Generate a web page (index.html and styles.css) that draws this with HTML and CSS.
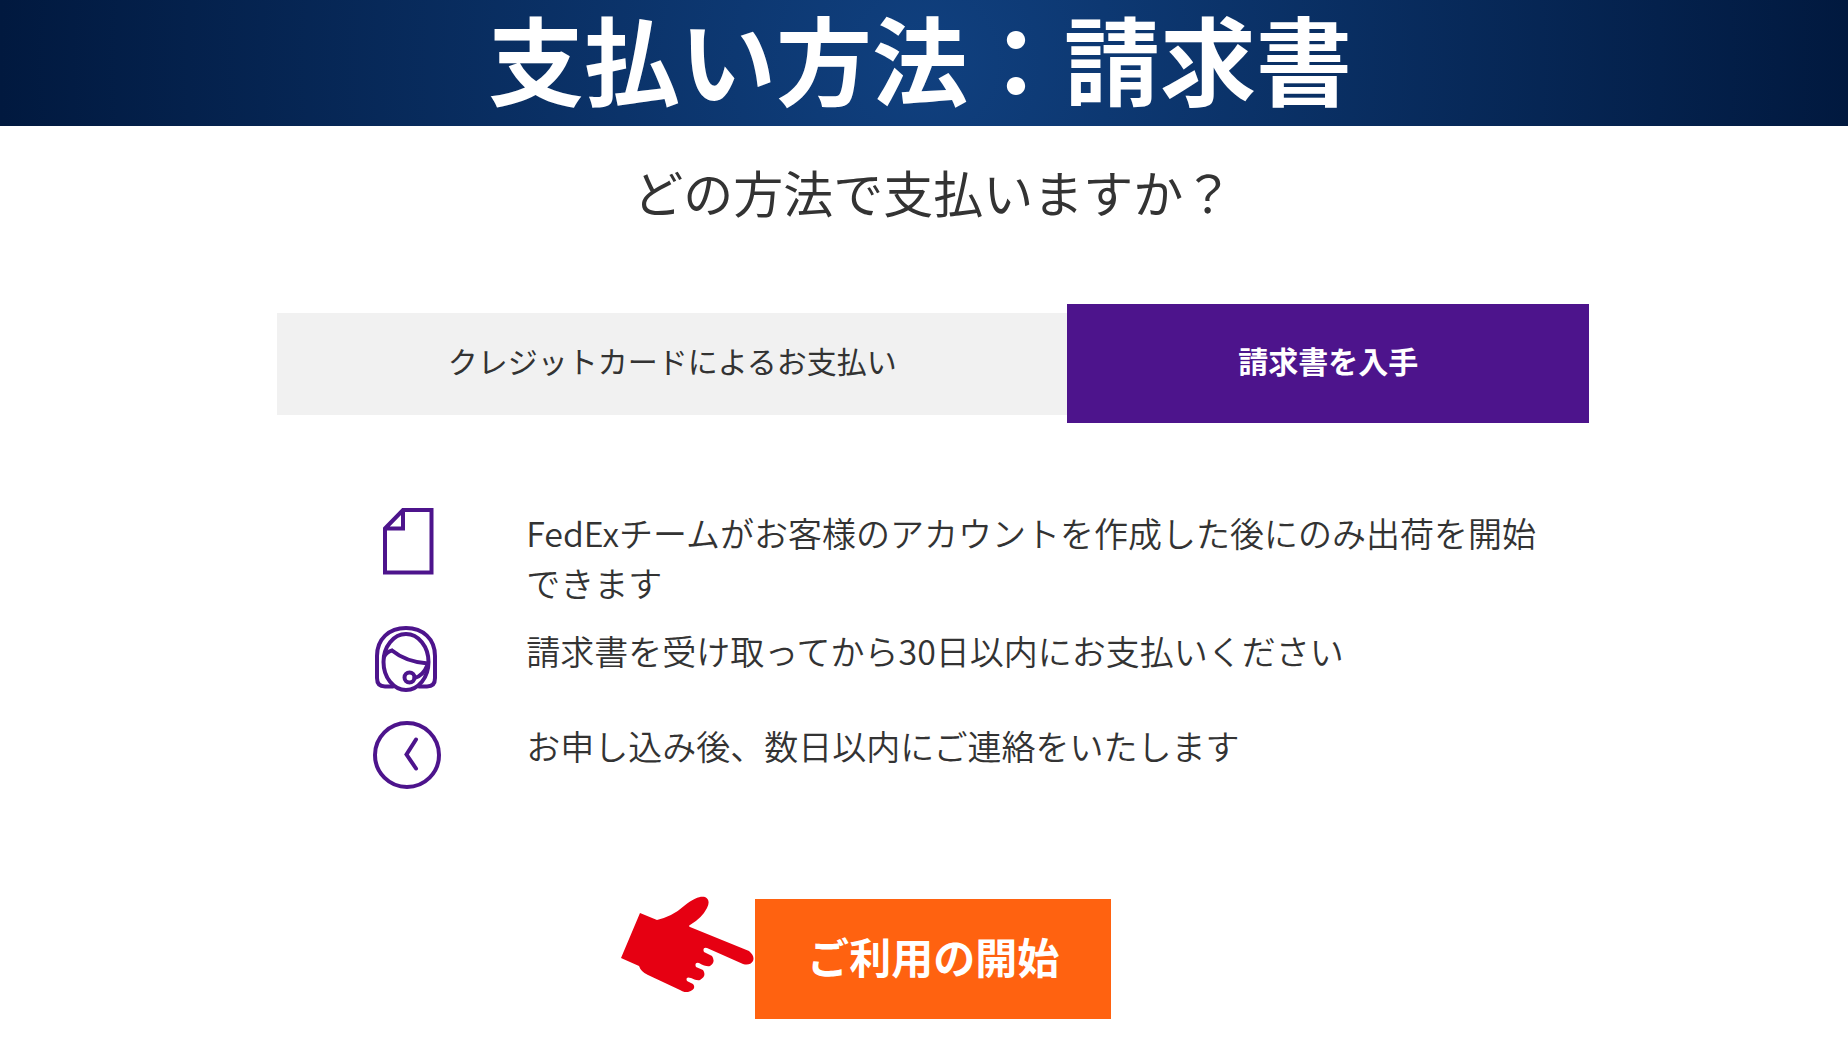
FILE: index.html
```
<!DOCTYPE html>
<html lang="ja">

<head>
    <meta charset="UTF-8">
    <meta name="viewport" content="width=device-width, initial-scale=1.0">
    <title>支払い方法：請求書</title>
    <link rel="stylesheet" href="styles.css">
</head>

<body>
    <header class="banner">
        <h1>支払い方法：請求書</h1>
    </header>

    <main class="container">
        <h2>どの方法で支払いますか？</h2>

        <!-- Payment Tabs -->
        <div class="tabs" role="tablist">
            <button type="button" class="tab" role="tab" aria-selected="false">クレジットカードによるお支払い</button>
            <button type="button" class="tab active" role="tab" aria-selected="true">請求書を入手</button>
        </div>

        <!-- Invoice Details -->
        <ul class="details">
            <li>
                <svg class="icon" viewBox="0 0 68 68" aria-hidden="true">
                    <path d="M12 20.500L30 2H58.500V64.500H12Z M30 2V20.500H12" />
                </svg>
                <p>FedExチームがお客様のアカウントを作成した後にのみ出荷を開始できます</p>
            </li>
            <li>
                <svg class="icon" viewBox="0 0 68 68" aria-hidden="true">
                    <path d="M20 60.500H12Q4 60.500 4 52V30C4 13 16 2 33 2S62 13 62 30V52Q62 60.500 54 60.500H46" />
                    <ellipse cx="33" cy="36" rx="22.500" ry="28" />
                    <path d="M11 31Q13 26 19 24.500Q33 36 55 37.500" />
                    <circle cx="36.500" cy="51.500" r="5" />
                    <path d="M41.500 52Q50 50 54.500 39" />
                </svg>
                <p>請求書を受け取ってから30日以内にお支払いください</p>
            </li>
            <li>
                <svg class="icon" viewBox="0 0 68 68" aria-hidden="true">
                    <circle cx="34" cy="34" r="32" />
                    <path d="M43 18.500L33.500 33.500L43 47.500" />
                </svg>
                <p>お申し込み後、数日以内にご連絡をいたします</p>
            </li>
        </ul>

        <div class="action">
            <button type="button" class="start">ご利用の開始</button>
            <svg class="hand" viewBox="0 0 134 96" aria-hidden="true">
                <path d="M19 17L36 24Q52 20 63 10C74 1 80 0 84 1Q90 4 86 12Q81 22 69 29Q67 30 69 31L128 55Q134 60 132 65Q129 70 122 68L86 52Q81 51 83 56L91 60Q95 66 89 70Q85 71 78 67Q73 66 75 71L82 74Q86 80 79 84Q76 85 70 82Q64 80 66 85L72 88Q76 93 67 96Q64 97 59 94L27 79Q20 76 18 70L0 62Z" />
            </svg>
        </div>
    </main>
</body>

</html>
```
FILE: styles.css
```
* {
    box-sizing: border-box;
}

body {
    margin: 0;
    background-color: #ffffff;
    color: #333333;
    font-family: "Noto Sans CJK JP", sans-serif;
}

.banner {
    background: radial-gradient(circle farthest-side at center, #10407f, #01193f);
    padding: 0 8px 12px 0;
}

h1 {
    margin: 0;
    color: #ffffff;
    font-size: 96px;
    line-height: 114px;
    font-weight: 700;
    text-align: center;
}

.container {
    padding: 33px 14% 24px 15%;
}

h2 {
    margin: 0 0 81px;
    font-size: 50px;
    line-height: 64px;
    font-weight: 400;
    text-align: center;
}

.tabs {
    display: flex;
    align-items: center;
}

.tab {
    flex: 53;
    height: 102px;
    padding: 0 0 8px;
    border: none;
    background-color: #f1f1f1;
    color: #333333;
    font-family: inherit;
    font-size: 30px;
    cursor: pointer;
}

.tab.active {
    flex: 35;
    height: 119px;
    background-color: #4d148c;
    color: #ffffff;
    font-weight: 700;
}

.details {
    list-style: none;
    margin: 85px 0 0;
    padding: 0 24px 0 96px;
}

.details li {
    display: flex;
    align-items: flex-start;
    gap: 85px;
    min-height: 95px;
    padding-bottom: 18px;
}

.details p {
    flex: 1;
    margin: 0;
    font-size: 34px;
    line-height: 50px;
    font-weight: 350;
}

.icon {
    flex: none;
    width: 68px;
    height: 68px;
    fill: none;
    stroke: #4d148c;
    stroke-width: 4;
    stroke-linecap: round;
}

.action {
    position: relative;
    width: 356px;
    margin: 83px auto 0;
}

.start {
    width: 100%;
    height: 120px;
    padding: 0 0 8px;
    border: none;
    background-color: #ff6210;
    color: #ffffff;
    font-family: inherit;
    font-size: 42px;
    font-weight: 700;
    cursor: pointer;
}

/* Hand pointing at the button */
.hand {
    position: absolute;
    right: 100%;
    top: -3px;
    width: 134px;
    height: 96px;
    fill: #e60012;
}
```
